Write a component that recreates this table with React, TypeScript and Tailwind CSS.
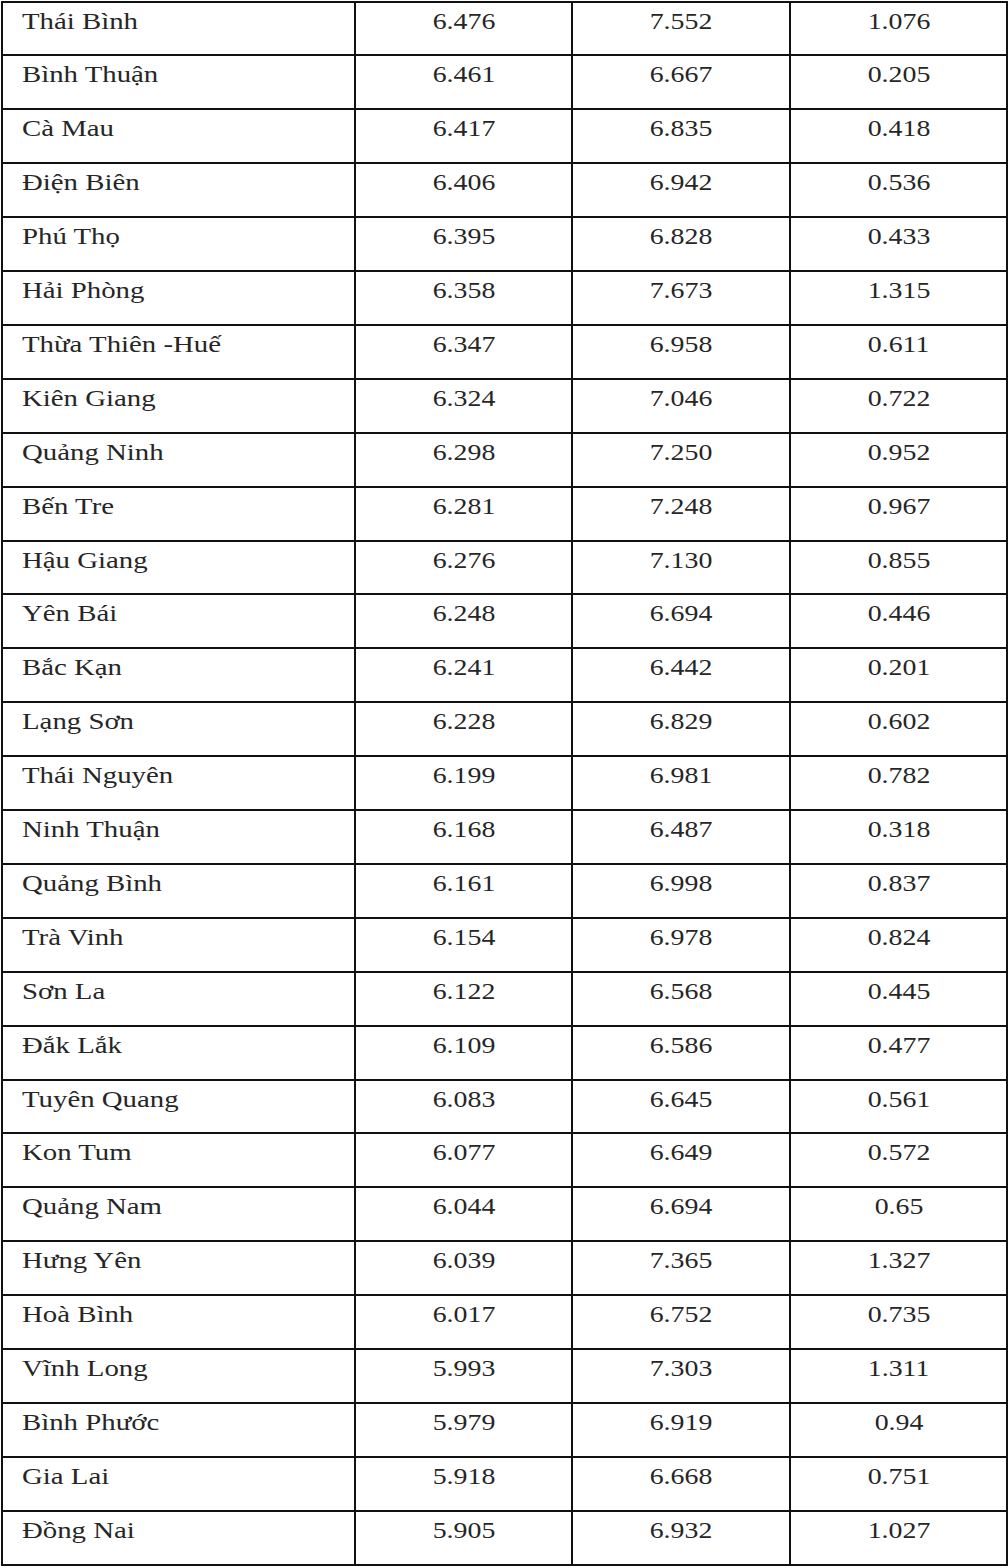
import React from "react";

interface Row {
  name: string;
  a: string;
  b: string;
  diff: string;
}

const rows: Row[] = [
  { name: "Thái Bình", a: "6.476", b: "7.552", diff: "1.076" },
  { name: "Bình Thuận", a: "6.461", b: "6.667", diff: "0.205" },
  { name: "Cà Mau", a: "6.417", b: "6.835", diff: "0.418" },
  { name: "Điện Biên", a: "6.406", b: "6.942", diff: "0.536" },
  { name: "Phú Thọ", a: "6.395", b: "6.828", diff: "0.433" },
  { name: "Hải Phòng", a: "6.358", b: "7.673", diff: "1.315" },
  { name: "Thừa Thiên -Huế", a: "6.347", b: "6.958", diff: "0.611" },
  { name: "Kiên Giang", a: "6.324", b: "7.046", diff: "0.722" },
  { name: "Quảng Ninh", a: "6.298", b: "7.250", diff: "0.952" },
  { name: "Bến Tre", a: "6.281", b: "7.248", diff: "0.967" },
  { name: "Hậu Giang", a: "6.276", b: "7.130", diff: "0.855" },
  { name: "Yên Bái", a: "6.248", b: "6.694", diff: "0.446" },
  { name: "Bắc Kạn", a: "6.241", b: "6.442", diff: "0.201" },
  { name: "Lạng Sơn", a: "6.228", b: "6.829", diff: "0.602" },
  { name: "Thái Nguyên", a: "6.199", b: "6.981", diff: "0.782" },
  { name: "Ninh Thuận", a: "6.168", b: "6.487", diff: "0.318" },
  { name: "Quảng Bình", a: "6.161", b: "6.998", diff: "0.837" },
  { name: "Trà Vinh", a: "6.154", b: "6.978", diff: "0.824" },
  { name: "Sơn La", a: "6.122", b: "6.568", diff: "0.445" },
  { name: "Đắk Lắk", a: "6.109", b: "6.586", diff: "0.477" },
  { name: "Tuyên Quang", a: "6.083", b: "6.645", diff: "0.561" },
  { name: "Kon Tum", a: "6.077", b: "6.649", diff: "0.572" },
  { name: "Quảng Nam", a: "6.044", b: "6.694", diff: "0.65" },
  { name: "Hưng Yên", a: "6.039", b: "7.365", diff: "1.327" },
  { name: "Hoà Bình", a: "6.017", b: "6.752", diff: "0.735" },
  { name: "Vĩnh Long", a: "5.993", b: "7.303", diff: "1.311" },
  { name: "Bình Phước", a: "5.979", b: "6.919", diff: "0.94" },
  { name: "Gia Lai", a: "5.918", b: "6.668", diff: "0.751" },
  { name: "Đồng Nai", a: "5.905", b: "6.932", diff: "1.027" },
];

// the scan is stretched sideways, so the glyphs are widened a little
const NumCell: React.FC<{ value: string }> = ({ value }) => (
  <div className="flex justify-center border-r-2 border-[#111] pt-[4px]">
    <span className="inline-block scale-x-[1.16] origin-center">{value}</span>
  </div>
);

const App: React.FC = () => {
  return (
    <div className="bg-white min-h-[1568px] pt-[1px] pl-[1px]">
      <div
        className="w-[1007px] border-l-2 border-t-2 border-[#111] text-[24px] leading-[28px] text-[#262626]"
        style={{ fontFamily: '"Liberation Serif", "Times New Roman", serif' }}
      >
        {rows.map((row, i) => (
          <div
            key={row.name}
            className={`grid grid-cols-[353px_217px_218px_217px] border-b-2 border-[#111] ${
              i === 0 || i === 10 || i === 20 ? "h-[53px]" : "h-[54px]"
            }`}
          >
            <div className="border-r-2 border-[#111] pl-[19px] pt-[4px]">
              <span className="inline-block scale-x-[1.2] origin-left whitespace-nowrap">
                {row.name}
              </span>
            </div>
            <NumCell value={row.a} />
            <NumCell value={row.b} />
            <NumCell value={row.diff} />
          </div>
        ))}
      </div>
    </div>
  );
};

export default App;
